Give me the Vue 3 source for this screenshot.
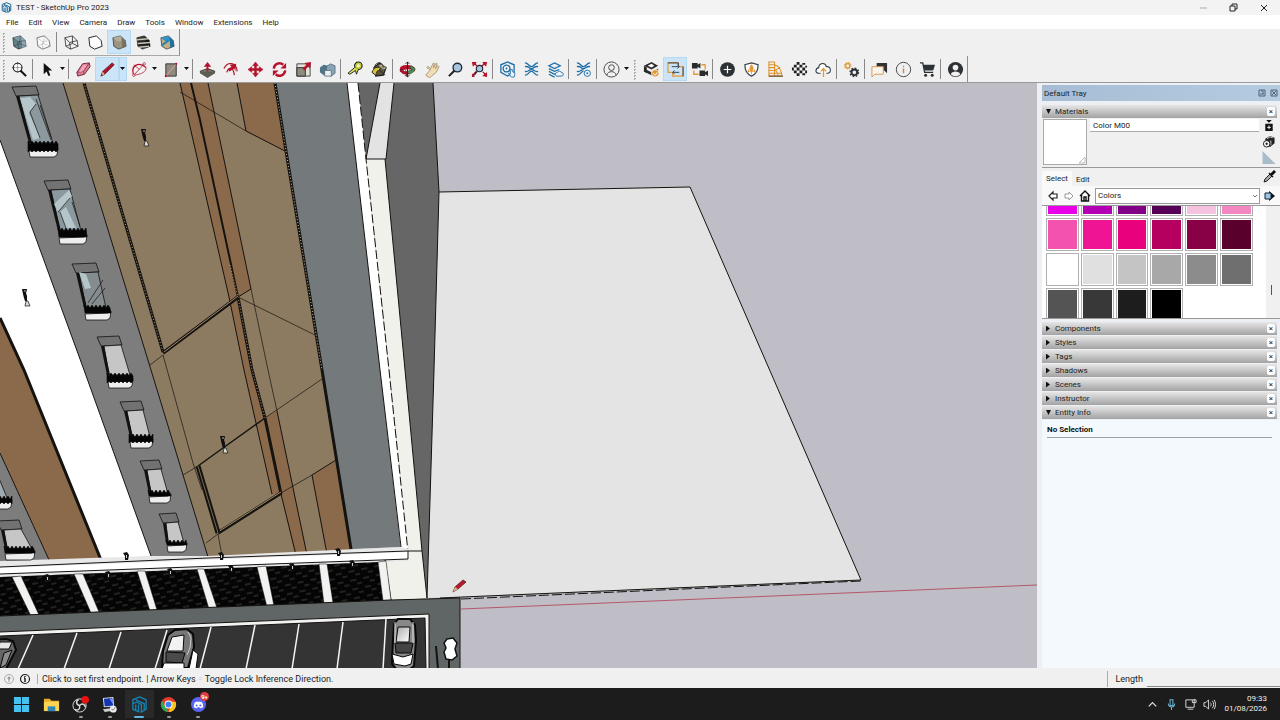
<script setup>
import { ref } from 'vue'

const menus = ['File', 'Edit', 'View', 'Camera', 'Draw', 'Tools', 'Window', 'Extensions', 'Help']

const k = 'fill="none" stroke="#222" stroke-width="1"'
const blue = 'fill="none" stroke="#1d6ea8" stroke-width="1.4"'
const red = '#b5122b'
const cube = (top, front, side) => `
  <path d="M2 4 10 2 15 7 16 13 8 16 3 13Z" fill="${front}" stroke="#333" stroke-width=".8"/>
  <path d="M2 4 10 2 15 7 7 8Z" fill="${top}"/>
  <path d="M11 3 15 7 16 13 12 15Z" fill="${side}"/>`

const icons = {
  xray: cube('#7f9aa5', '#64808c', '#8ba7b2') + `<path d="M2 4 7 8 8 16M7 8 15 7M3 13 9 10 16 13M9 10 10 2" ${k} stroke-opacity=".4"/>`,
  back: `<path d="M2 4 10 2 15 7 16 13 8 16 3 13Z" fill="#fafafa" stroke="#777"/><path d="M2 4 8 8 8 16M8 8 15 7M3 13 9 10 16 13M9 10 10 2" fill="none" stroke="#aaa" stroke-width=".8" stroke-dasharray="2 1"/>`,
  wire: '<path d="M2 4 10 2 15 7 16 13 8 16 3 13ZM2 4 7 9 8 16M7 9 15 7M3 13 10 10 16 13M10 10 10 2" fill="none" stroke="#222" stroke-width=".8"/>',
  hidden: '<path d="M2 4 10 2 15 7 16 13 8 16 3 13Z" fill="#fff" stroke="#222"/>',
  shaded: cube('#b3ad98', '#9b957f', '#777262'),
  textured: cube('#333', '#222', '#111') + '<path d="M2 6 14 5M3 10 16 9M4 14 15 13" stroke="#c9c6b8" stroke-width="1.6"/>',
  mono: cube('#2f93c9', '#c4ad7e', '#216f9f') + '<path d="M3 12 10 7" stroke="#2383b6" stroke-width="2"/>',
  zoomWin: '<circle cx="7" cy="7" r="4.6" fill="#fff" stroke="#222" stroke-width="1.2"/><path d="M7 1v12M1 7h12" stroke="#222" stroke-width=".8" stroke-dasharray="1 1"/><path d="m10 10 6 6" stroke="#111" stroke-width="2.2"/>',
  select: '<path d="m5 2 0 12 3-3 2 5 2-1-2-5h4Z" fill="#111"/>',
  eraser: '<path d="M2 12 8 3 15 2 16 6 10 14 3 16Z" fill="#dd7c93" stroke="#6b2636"/><path d="m2 12 7-1 6-9M9 11l1 3" fill="none" stroke="#8e3c50"/><path d="m4 12 5-8 4 0-5 7Z" fill="#f1a7b8"/>',
  pencil: `<path d="m2 16 2-5L14 2l2 2L6 14Z" fill="${red}" stroke="#4c101a" stroke-width=".8"/><path d="m2 16 2-5 2 3Z" fill="#d6b282"/><path d="m2 16 1-2 1 1Z" fill="#111"/>`,
  arc: `<path d="M3 15C-1 5 8 0 16 7" fill="none" stroke="${red}" stroke-width="1.3"/><path d="M3 15 14 3M3 4l6 5M16 7c0 4-4 7-13 8" fill="none" stroke="${red}" stroke-width=".8"/><circle cx="14" cy="3" r="1.3" fill="#fff" stroke="${red}" stroke-width=".8"/><circle cx="3" cy="15" r="1.3" fill="#fff" stroke="${red}" stroke-width=".8"/>`,
  rect: `<path d="M3 3h11v13H3Z" fill="#8f8b7d" stroke="#333"/><path d="M3 16 14 3" stroke="#f0a4a4"/><circle cx="3" cy="16" r="1.2" fill="${red}"/><circle cx="14" cy="3" r="1.2" fill="${red}"/>`,
  push: `<path d="m1 11 8-3 8 3-8 5Z" fill="#7a806c" stroke="#333"/><path d="M1 11v2l8 5 8-5v-2" fill="#5c5e50"/><path d="M9 1 5 6h3v5h2V6h3Z" fill="${red}"/>`,
  offset: `<path d="M1 8C5 0 14 1 15 11M4 12C6 6 11 6 12 15" fill="none" stroke="${red}" stroke-width="1.3"/><path d="m14 3-7 1 2 2-4 3 2 2 5-3 1 3Z" fill="${red}"/>`,
  move: `<path d="m9 1 3 4h-2v3h3V6l4 3-4 3v-2h-3v3h2l-3 4-3-4h2v-3H5v2L1 9l4-3v2h3V5H6Z" fill="${red}" stroke="${red}" stroke-width=".6"/>`,
  rotate: `<path d="M3 8a6 6 0 0 1 10-4M15 10a6 6 0 0 1-10 4" fill="none" stroke="${red}" stroke-width="2.6"/><path d="m16 2 0 6h-6ZM2 16v-6h6Z" fill="${red}"/>`,
  scale: `<path d="M2 3h14v13H2Z" fill="#e6e3da" stroke="#444"/><path d="M2 7h9v9H2Z" fill="#8f8b7d" stroke="#333"/><path d="m17 1-7 1 2 2-4 4 2 2 4-4 2 2Z" fill="${red}"/>`,
  flip: '<path d="m1 7 4-3 5 1v8l-5 2-4-3Z" fill="#4e7488"/><path d="m8 6 4-3 5 2v8l-4 3-5-2Z" fill="#87a5b4" stroke="#567" stroke-width=".8"/><path d="M6 10h7v6H6Z" fill="#e9eff2" stroke="#567" stroke-width=".8"/>',
  tape: '<circle cx="12" cy="5" r="4" fill="#c3cf38" stroke="#222" stroke-width="1.2"/><circle cx="12" cy="5" r="1.6" fill="#f5f5dc"/><path d="m8 7-7 6 2 1 6-4 1 4 2-5" fill="#dadf5b" stroke="#222"/>',
  paint: '<path d="m3 7 6-5 7 5-3 8-8 1Z" fill="#5a5442" stroke="#1d1b15" stroke-width="1.2"/><path d="m8 5 4-2 4 5-3 1Z" fill="#a9a68e"/><path d="M1 12c2-5 6-7 9-4L8 10c-2 0-2 3-3 5ZM9 10l6 5" fill="#d8c43c" stroke="#2b281a"/><path d="M4 6c1-6 9-5 9 1" fill="none" stroke="#222"/>',
  orbit: `<path d="M1 8c0-5 14-5 16 0v3c-4-3-12-3-16 1Z" fill="${red}"/><path d="M9 14c4 0 8-3 8-6l-4-3-2 2 3 2-5 2Z" fill="#4a8b53" stroke="#243d28" stroke-width=".6"/><path d="M1 9c1 4 4 5 7 5l-1 2 3-3-3-3v2L3 9Z" fill="${red}" stroke="#5a1420" stroke-width=".6"/><path d="M9 1v16M7 3l2-2 2 2M7 15l2 2 2-2" ${k}/>`,
  pan: '<path d="M3 15 8 9 5 8c-2-2 0-3 2-1l1 1 3-6 1 1-1 4 3-5 1 1-2 5 3-3 1 1-3 6-5 4-2 2Z" fill="#f3dcb0" stroke="#8a7a57" stroke-width=".7"/>',
  zoom: '<circle cx="11" cy="7" r="4.6" fill="#a8c5dd" stroke="#1e2a38" stroke-width="1.4"/><path d="m8 10-6 6" stroke="#222" stroke-width="2.2"/>',
  extents: `<circle cx="9" cy="8" r="3.4" fill="#a8c5dd" stroke="#1e2a38" stroke-width="1.2"/><path d="m6 11-3 4" stroke="#222" stroke-width="2"/><path d="M1 1h5L5 3l2 2-1 1-2-2-2 2ZM17 1h-5l1 2-2 2 1 1 2-2 2 2ZM17 17v-5l-2 1-2-2-1 1 2 2-2 2ZM1 17v-4l1 1 2-2 1 1-2 2 1 2Z" fill="${red}"/>`,
  tw1: `<path d="M9 1 16 4v8l-7 4-7-4V4Z" ${blue}/><circle cx="8" cy="8" r="3.6" ${blue}/><circle cx="8" cy="8" r="1" fill="#1d6ea8"/><path d="M12 9v5l-2-1 3 4h3l1-4-3-2V9Z" fill="#eef4f9" stroke="#1d6ea8" stroke-width=".9"/>`,
  tw2: `<path d="M2 2c4 0 4 4 7 4s3-4 7-4M2 6c4-1 4 2 7 2s3-3 7-2M2 15c4 0 4-4 7-4s3 4 7 4M2 11c4 1 4-2 7-2s3 3 7 2" ${blue}/>`,
  tw3: `<path d="m2 5 6-3 6 3-6 3ZM2 8l6 3 5-2M2 11l6 3 2-1M2 14l6 3" ${blue}/><path d="M10 16c-2-1-1-4 1-4 1-2 4-1 4 0 3 0 3 4 0 4Z" fill="#eef4f9" stroke="#1d6ea8"/>`,
  tw4: `<path d="M2 2c4 0 4 4 7 4s3-4 7-4M2 6c4-1 4 2 7 2s3-3 7-2M2 15c4 0 4-4 7-4M2 11c4 1 4-2 7-2" ${blue}/><circle cx="13" cy="13" r="3.3" fill="#eef4f9" stroke="#1d6ea8"/><circle cx="13" cy="13" r="1" fill="#1d6ea8"/>`,
  user: '<circle cx="9" cy="9" r="8" fill="none" stroke="#444"/><circle cx="9" cy="7" r="3" fill="none" stroke="#444"/><path d="M4 15c1-5 9-5 10 0" fill="none" stroke="#444"/>',
  ext1: '<path d="m1 5 8-4 7 4-7 4Z" fill="#2b2b2b"/><path d="m1 8 8 4 7-4v3l-7 4-8-4Z" fill="#2b2b2b"/><path d="M1 5v6l3 2V7Z" fill="#2b2b2b"/><path d="m5 5 4-2 3 2-3 2Z" fill="#fff"/><circle cx="13" cy="13" r="4" fill="#e39a37" stroke="#f0f0f0"/><path d="m11 13 2 2 2-3" fill="none" stroke="#fff"/>',
  ext2: '<path d="M12 5V2H1v10h4" fill="none" stroke="#e39a37" stroke-width="1.3"/><path d="M6 12v4h11V6h-4" fill="none" stroke="#e39a37" stroke-width="1.3"/><path d="M5 6h8M11 4l2 2-2 2M13 12H6m2-2-2 2 2 2M1 2h11v3M17 6v10" fill="none" stroke="#2d3d4a"/>',
  ext3: '<path d="M1 2h6v6H1ZM7 4l3-2v6L7 6ZM9 10h6v6H9Zm6 2 3-2v6l-3-2Z" fill="#2b2b2b"/><path d="M11 4h4v5M3 10v4h5" fill="none" stroke="#e39a37" stroke-width="1.4"/>',
  add: '<circle cx="9" cy="9" r="7.8" fill="#2c3135"/><path d="M9 5v8M5 9h8" stroke="#fff" stroke-width="1.3"/>',
  shield: '<path d="M9 16c-5-2-7-6-7-12l7-2 7 2c0 6-2 10-7 12Z" fill="#fff" stroke="#34424e" stroke-width="1.3"/><path d="M9 4c2 2 2 4 1 7H8C7 8 7 6 9 4ZM9 11v3M6 9l-1 3 2-1m5-2 1 3-2-1" fill="#e39a37" stroke="#e39a37"/>',
  fan: '<path d="M2 1h6v15H2ZM8 4c4 1 7 5 8 12H8M8 9c2 1 3 3 4 7M2 4h6M2 7h6M2 10h6M2 13h14M8 10l6-3" fill="none" stroke="#dc902b" stroke-width="1.1"/><path d="M2 16h15" stroke="#444"/>',
  checker: '<circle cx="9" cy="9" r="7.8" fill="#f4f4f4"/><path d="M6 1h3v3H6ZM12 2h3v2h-3ZM3 4h3v3H3ZM9 4h3v3H9ZM15 5h2v2h-2ZM1 7h2v3H1ZM6 7h3v3H6ZM12 7h3v3h-3ZM3 10h3v3H3ZM9 10h3v3H9ZM15 10h2v3h-2ZM6 13h3v3H6ZM12 13h3v2h-3Z" fill="#222"/>',
  cloud: '<path d="M6 13H4c-4 0-4-5 0-6C4 2 11 1 12 6c5-1 6 7 1 7h-1" fill="#fff" stroke="#34424e" stroke-width="1.2"/><path d="M9 17V9M6 11l3-3 3 3" fill="none" stroke="#e39a37" stroke-width="1.4"/>',
  gears: '<circle cx="5" cy="5" r="2.4" fill="none" stroke="#e39a37" stroke-width="1.5"/><circle cx="5" cy="5" r="3.6" fill="none" stroke="#e39a37" stroke-dasharray="1.4 1.4"/><circle cx="12" cy="12" r="3" fill="none" stroke="#2c3135" stroke-width="2"/><circle cx="12" cy="12" r="4.5" fill="none" stroke="#2c3135" stroke-width="1.4" stroke-dasharray="1.8 1.7"/>',
  chat: '<path d="M6 2h11v11l-3-3H6Z" fill="#2f3336"/><path d="M1 6h12v8H4l-3 3Z" fill="#fbf4ea" stroke="#d9955a"/>',
  info: '<circle cx="9" cy="9" r="7.6" fill="none" stroke="#444"/><path d="M9 8v5M9 5v1.5" stroke="#d4843c" stroke-width="1.5"/>',
  cart: '<path d="M1 2h3l2 10h9" fill="none" stroke="#2c3135" stroke-width="1.4"/><path d="M4 4h13l-2 6H6Z" fill="#2c3135"/><circle cx="7" cy="15" r="1.6" fill="#2c3135"/><circle cx="14" cy="15" r="1.6" fill="#2c3135"/>',
  account: '<circle cx="9" cy="9" r="8" fill="#2c3135"/><circle cx="9" cy="7" r="3" fill="#f0f0f0"/><path d="M4 14c1-4 9-4 10 0-3 3-7 3-10 0Z" fill="#f0f0f0"/>',
}

const styleTools = ['xray', 'back', '|', 'wire', 'hidden', 'shaded', 'textured', 'mono']
const mainTools = [
  'zoomWin', '|', 'select', 'v', '|', 'eraser', 'pencil', 'v', 'arc', 'v', 'rect', 'v', '|',
  'push', 'offset', 'move', 'rotate', 'scale', 'flip', '|', 'tape', 'paint', '|',
  'orbit', 'pan', 'zoom', 'extents', '|', 'tw1', 'tw2', 'tw3', '|', 'tw4', '|', 'user', 'v', ':',
  'ext1', 'ext2', 'ext3', '|', 'add', 'shield', 'fan', 'checker', 'cloud', '|', 'gears', '|',
  'chat', 'info', 'cart', '|', 'account',
]

const activeStyle = ref('shaded')
const activeTool = ref('pencil')
const isOn = (name) => name === activeStyle.value || name === activeTool.value || name === 'ext2'

const swatches = [
  '#e800e8', '#b400b4', '#820087', '#560058', '#f5c3e0', '#f387c1',
  '#f352ae', '#ef1493', '#e8007c', '#b50060', '#880045', '#5a002c',
  '#ffffff', '#e0e0e0', '#c4c4c4', '#a8a8a8', '#8c8c8c', '#6f6f6f',
  '#545454', '#383838', '#1d1d1d', '#000000',
]
const materialName = ref('Color M00')
const library = ref('Colors')
const panels = ['Components', 'Styles', 'Tags', 'Shadows', 'Scenes', 'Instructor']

// x, y, w: lintel; bl, br, by: foot of the glass; then the planter box
const windows = [
  { x: 12, y: 87, w: 24, bl: 31, br: 53, by: 143, glass: '#8b989d', planter: [28, 141, 30, 16] },
  { x: 44, y: 181, w: 24, bl: 60, br: 81, by: 231, glass: '#8b989d', planter: [58, 228, 29, 16] },
  { x: 72, y: 264, w: 24, bl: 86, br: 106, by: 308, glass: '#858c8f', planter: [84, 305, 27, 15] },
  { x: 97, y: 337, w: 22, bl: 109, br: 130, by: 375, glass: '#c6c6c6', planter: [107, 373, 26, 15] },
  { x: 120, y: 402, w: 21, bl: 132, br: 150, by: 437, glass: '#c6c6c6', planter: [129, 434, 24, 14] },
  { x: 140, y: 461, w: 19, bl: 151, br: 168, by: 494, glass: '#c6c6c6', planter: [148, 490, 23, 13] },
  { x: 159, y: 514, w: 17, bl: 168, br: 184, by: 543, glass: '#c6c6c6', planter: [166, 540, 21, 12] },
  { x: -3, y: 521, w: 22, bl: 7, br: 32, by: 549, glass: '#c6c6c6', planter: [4, 546, 31, 14] },
  { x: -26, y: 468, w: 22, bl: -14, br: 8, by: 500, glass: '#9fabb0', planter: [-12, 496, 24, 13] },
]
const lintel = (w) => `${w.x},${w.y} ${w.x + w.w},${w.y - 1} ${w.x + w.w + 3},${w.y + 8} ${w.x + 4},${w.y + 9}`
const glass = (w) => `${w.x + 7},${w.y + 9} ${w.x + w.w + 2},${w.y + 8} ${w.br},${w.by} ${w.bl},${w.by}`
const reveal = (w) => `${w.x + 4},${w.y + 9} ${w.x + 7},${w.y + 9} ${w.bl + 1},${w.by} ${w.bl - 2},${w.by}`
const box = ([x, y, w, h]) => `${x + 1},${y + h - 6} ${x + w - 3},${y + h - 7} ${x + w},${y + h - 9} ${x + w - 1},${y + h - 2} ${x + w - 4},${y + h} ${x + 2},${y + h}`
function hedge([x, y, w, h]) {
  const pts = []
  for (let i = 0; i <= w; i += 2) pts.push(`${x + i},${y + (i % 4 ? 3 : 0)}`)
  for (let i = w; i >= 0; i -= 2) pts.push(`${x + i},${y + h - (i % 4 ? 7 : 5)}`)
  return pts.join(' ')
}

const struts = [
  '12,577 21,576 39,615 31,616', '74,574 83,574 99,612 91,613', '137,571 145,571 157,610 150,611',
  '197,569 204,569 217,608 209,609', '257,567 266,566 274,606 267,607', '319,564 327,564 333,603 324,604',
  '378,562 386,561 391,600 383,601',
]
const bays = [
  'M33 635 18 669', 'M77 633 64 669', 'M121 632 109 669', 'M167 630 155 669', 'M211 627 200 669',
  'M255 625 246 669', 'M299 624 292 669', 'M343 622 337 669', 'M386 619 383 669',
]
const figures = [[144, 137], [25, 297], [223, 444]]
const lamps = [[126, 556], [221, 556], [338, 552], [47, 578], [108, 575], [170, 572], [231, 569], [292, 567], [352, 564]]

const apps = [
  { name: 'Start', art: '<path d="M1 1h7.5v7.5H1ZM9.5 1H17v7.5H9.5ZM1 9.5h7.5V17H1ZM9.5 9.5H17V17H9.5Z" fill="#45c2f0"/>' },
  { name: 'File Explorer', art: '<path d="M1 3h6l2 2h8v11H1Z" fill="#e9ae2a"/><path d="M1 6h16v10H1Z" fill="#fbd456"/><path d="M5 11h8v5H5Z" fill="#2c87b8"/>' },
  { name: 'OBS Studio', run: true, art: '<circle cx="8" cy="10" r="7" fill="#1b1b1b" stroke="#ddd"/><path d="M8 10C4 9 4 5 7 4M8 10c3-3 6-1 6 2M8 10c1 4-2 6-5 4" fill="none" stroke="#ddd" stroke-width="1.5"/><circle cx="14" cy="4" r="4" fill="#e81010"/>' },
  { name: 'Remote Desktop', run: true, art: '<path d="m2 2 11-1 1 10-11 1Z" fill="#e5e5e5"/><path d="m3 3 9-1 1 8-9 1Z" fill="#1434b5"/><path d="m9 3 3 0 1 6Z" fill="#7c9bf0"/><path d="m2 14 8-1 1 3-7 1Z" fill="#ccc"/><circle cx="13" cy="14" r="3.6" fill="#eee"/><path d="m11 14 2 1 2-3" fill="none" stroke="#777"/>' },
  { name: 'SketchUp', on: true, art: '<path d="M9 1 16 4v10l-5 3V9L6 6.5 2 8V4ZM2 8v6l7 3M5 9v6M8 9v7M5 4l9 4v7" fill="none" stroke="#1683b5" stroke-width="1.4"/>' },
  { name: 'Google Chrome', run: true, art: '<circle cx="9" cy="9" r="8" fill="#e33b2e"/><path d="M2 5 9 17A8 8 0 0 1 2 5Z" fill="#2da94f"/><path d="M9 17 13 6h3.5A8 8 0 0 1 9 17Z" fill="#fbc116"/><circle cx="9" cy="9" r="4.2" fill="#fff"/><circle cx="9" cy="9" r="3.2" fill="#3f82ee"/>' },
  { name: 'Discord', run: true, badge: '9+', art: '<circle cx="9" cy="9" r="8" fill="#5865f2"/><path d="M4 12c0-4 1-6 3-6h4c2 0 3 2 3 6l-3 1-1-1H8l-1 1Z" fill="#fff"/><circle cx="7" cy="10" r="1.1" fill="#5865f2"/><circle cx="11" cy="10" r="1.1" fill="#5865f2"/>' },
]
</script>

<template>
  <div class="app">
    <header class="titlebar">
      <svg class="logo" viewBox="0 0 18 18"><path d="M9 1 16 4v10l-5 3V9L6 6 2 8V4ZM2 8v6l7 3M5 9v6M8 9v7M5 4l9 4v7" fill="none" stroke="#13639a" stroke-width="1.6" /></svg>
      <span class="title">TEST - SketchUp Pro 2023</span>
      <div class="win_btns">
        <button type="button" aria-label="Minimize"><svg viewBox="0 0 10 10"><path d="M2 5h7" stroke="#aaa" /></svg></button>
        <button type="button" aria-label="Restore"><svg viewBox="0 0 10 10"><path d="M2 3h5v5H2ZM4 3V1h5v5H7" fill="none" stroke="#222" /></svg></button>
        <button type="button" aria-label="Close"><svg viewBox="0 0 10 10"><path d="m2 2 6 6M8 2 2 8" stroke="#222" /></svg></button>
      </div>
    </header>

    <nav class="menubar">
      <button v-for="m in menus" :key="m" type="button">{{ m }}</button>
    </nav>

    <div class="toolbars">
      <div class="toolbar">
        <i class="grip"></i>
        <template v-for="(t, i) in styleTools" :key="i">
          <i v-if="t === '|'" class="sep"></i>
          <button v-else type="button" class="tool" :class="{ on: isOn(t) }" :aria-label="t" @click="activeStyle = t">
            <svg viewBox="0 0 18 18" v-html="icons[t]"></svg>
          </button>
        </template>
      </div>
      <div class="toolbar">
        <i class="grip"></i>
        <template v-for="(t, i) in mainTools" :key="i">
          <i v-if="t === '|'" class="sep"></i>
          <i v-else-if="t === ':'" class="grip"></i>
          <button v-else-if="t === 'v'" type="button" class="drop" :class="{ on: mainTools[i - 1] === activeTool }" aria-label="More">
            <svg viewBox="0 0 6 4"><path d="M0 0h5L2.5 3Z" fill="#111" /></svg>
          </button>
          <button v-else type="button" class="tool" :class="{ on: isOn(t) }" :aria-label="t" @click="activeTool = t">
            <svg viewBox="0 0 18 18" v-html="icons[t]"></svg>
          </button>
        </template>
      </div>
    </div>

    <main class="workspace">
      <div class="viewport">
        <svg class="scene" viewBox="0 83 1037 585" preserveAspectRatio="xMinYMin slice">
          <defs>
            <pattern id="mesh" width="13" height="9" patternUnits="userSpaceOnUse" patternTransform="rotate(-12)">
              <rect width="13" height="9" fill="#050505" />
              <path d="M1 2h6M7 6h5" stroke="#3f3f3f" stroke-width="1" />
            </pattern>
            <linearGradient id="carGlass" x1="0" y1="0" x2="1" y2="1">
              <stop offset="0" stop-color="#aaa" />
              <stop offset="1" stop-color="#fff" />
            </linearGradient>
          </defs>
          <rect y="83" width="1037" height="585" fill="#bfbec6" />

          <!-- ground plane -->
          <path d="M439 192 690 187 861 580 427 598 430 450Z" fill="#e4e4e4" />
          <path d="M439 192 690 187 861 580 440 598" class="ln" />
          <path d="M461 599 861 581" class="ln" stroke-dasharray="10 3" />
          <path d="M461 609 1037 585" fill="none" stroke="#b5566a" />

          <!-- facades -->
          <path d="M0 83H63L151 370 208 557 151 556 84 370 0 140Z" fill="#7d7d7d" />
          <path d="M0 140 84 370 151 556 101 560 0 318Z" fill="#fff" />
          <path d="M0 318 24 370 102 560 50 562 0 453Z" fill="#8b694b" />
          <path d="M0 453 50 562 0 567Z" fill="#7d7d7d" />
          <path d="M63 83H275L286 151 322 370 351 553 208 557 151 370Z" fill="#8d7b61" />
          <path d="M180 83H208L251 289 238 297 252 370 265 418 277 411 307 555H295L281 494 272 494 244 370 229 297Z" fill="#8b694b" />
          <path d="M237 83H275L285 151 246 131ZM312 475 336 460 351 553 327 554Z" fill="#8b694b" />
          <path d="M63 83 151 370 208 557M0 140 84 370 151 556M0 453 50 562" class="ln" />
          <path d="M0 318 24 370 101 560" class="ln" stroke-width="3" />
          <path d="M180 83 229 297 244 370 272 494M281 494 296 555M208 83 251 289 238 297M277 411 307 555M237 83 246 131 285 151M327 554 312 475 336 460" class="ln" />
          <path d="M180 92 246 131M251 289 268 370 277 411M240 298 317 336M150 365 163 355 193 463 202 490M183 475 198 466M265 418 322 379M206 543 218 534 222 556M281 493 312 475" class="ln thin" />
          <path d="M191 83 200 120 238 297" class="ln" stroke-width="2" />
          <path d="M238 297 252 370 265 418 281 494" class="ln" stroke-width="3" />
          <path d="M84 83 163 352" class="ln" stroke-width="3" />
          <path d="M84 83 163 352M230 265 238 297 252 370 265 418" fill="none" stroke="#b39b77" stroke-dasharray="1 2" />
          <path d="M163 353 238 297M218 533 281 493" class="ln" stroke-width="3.5" />
          <path d="M164 352 238 296M218 532 281 492" fill="none" stroke="#a08b6d" />
          <path d="M198 466 218 533" class="ln" stroke-width="5" />
          <path d="M198 466 218 533" fill="none" stroke="#77674f" />
          <path d="M198 466 223 448 265 418" class="ln" stroke-width="1.5" />

          <!-- side wall and slab edges -->
          <path d="M275 83H347L374 300 401 547 351 549 322 370Z" fill="#747a7c" />
          <path d="M275 83 286 151 322 370 351 549" class="ln" stroke-width="3" />
          <path d="M275 83 286 151 322 370" fill="none" stroke="#c9bfa9" stroke-dasharray="1 2" />
          <path d="M357 83H433L439 192 434 370 427 598 385 400Z" fill="#666" />
          <path d="M380 83H394L386 159H366Z" fill="#e3e3e3" />
          <path d="M366 159H385L405 370 422 551 427 598 391 601 385 560 409 552Z" fill="#f0f1eb" />
          <path d="M347 83H358L366 159 389 370 409 553 401 550 380 370Z" fill="#fff" />
          <path d="M347 83 380 370 401 547M380 83 366 159H386L394 83M433 83 439 192 434 370 427 598M385 159 405 370 422 551 427 598" class="ln" />
          <path d="M358 83 366 159 389 370 408 552" class="ln" stroke-dasharray="9 3" />

          <!-- ledge, mesh panels, road -->
          <path d="M0 561 151 556 208 556 401 547 409 549V561L0 577Z" fill="#e8e8e8" />
          <path d="M0 568 409 552V559L0 574Z" fill="#fff" />
          <path d="M0 567 208 558 408 551V559L0 574M408 551H422M385 560 391 600" class="ln" />
          <path d="M0 577 380 562 384 601 0 616Z" fill="url(#mesh)" />
          <polygon v-for="s in struts" :key="s" :points="s" fill="#f2f2f0" stroke="#111" stroke-width=".5" />
          <path d="M0 616 391 600 460 598V668H0Z" fill="#606565" />
          <path d="M0 616 391 600 460 598V668" class="ln" />
          <path d="M0 632 429 614V668H0Z" fill="#f2f2f2" />
          <path d="M0 636 425 618 426 668H0Z" fill="#343434" />
          <path d="M0 632 429 614V668M0 636 425 618 426 668" class="ln" />
          <path v-for="b in bays" :key="b" :d="b" fill="none" stroke="#f5f5f5" stroke-width="1.5" />

          <g v-for="(w, i) in windows" :key="'w' + i">
            <polygon :points="lintel(w)" fill="#727272" stroke="#111" stroke-width=".8" />
            <polygon :points="glass(w)" :fill="w.glass" stroke="#111" stroke-width=".8" />
            <polygon :points="reveal(w)" fill="#111" />
            <polygon :points="box(w.planter)" fill="#eee" stroke="#111" stroke-width=".8" />
            <polygon :points="hedge(w.planter)" fill="#050505" stroke="#050505" stroke-width=".6" />
          </g>
          <path d="M20 98 30 97 36 104 29 113 40 138 33 140ZM54 204 69 190 72 196 58 212ZM60 212 66 207 76 228 66 228ZM79 272 86 274 91 288 85 289Z" fill="#b5c6ca" />
          <path d="M36 99 51 140M40 105 51 137M72 202 80 226M88 303 103 280M92 304 105 288M36 104 30 112 40 138M58 212 70 198M60 212 66 228" class="ln thin" />

          <g v-for="f in figures" :key="f[0]" :transform="`translate(${f[0]} ${f[1]})`">
            <path d="M-3-8 2-8 1-4 2-1 2 4 0 4-1 1-2-3Z" fill="#111" />
            <path d="M-1-7H1V-5H-1ZM1 4H3L5 9H0Z" fill="#d8d8cc" stroke="#111" stroke-width=".7" />
          </g>
          <g v-for="l in lamps" :key="l[0]" :transform="`translate(${l[0]} ${l[1]})`">
            <path d="M-3-3 1-4 3-1 2 4H-1V0Z" fill="#111" /><path d="M0-1h1v3H0Z" fill="#ccc" />
          </g>

          <!-- cars -->
          <g stroke="#080808">
            <path d="M394 624 398 619H410L415 625 416 640 414 666 409 670H397L392 664 393 640Z" fill="#888" stroke-width="2" />
            <path d="M398 627H410L409 642H396Z" fill="url(#carGlass)" />
            <path d="M395 643H413L411 653H396Z" fill="#444" />
            <path d="M392 654 403 657 413 654 411 664 405 666 394 664Z" fill="#fff" />
            <path d="M395 622V643M413 622V643" stroke="#ddd" />
            <path d="M168 635 175 630 187 629 193 634 194 647 188 668H162L163 651Z" fill="#777" stroke-width="2" />
            <path d="M172 637 184 635 183 651H167Z" fill="#f2f2f2" />
            <path d="M166 652 185 653 182 663 166 662Z" fill="#4a4a4a" />
            <path d="M188 632 191 638 190 648 187 655" stroke="#ccc" fill="none" />
            <path d="M164 663H184V669H162ZM193 650 198 654 196 669H189Z" fill="#fff" />
            <path d="M-8 640 6 639 13 641 16 650 6 669H-8Z" fill="#666" stroke-width="2" />
            <path d="M0 642 12 642 9 649H-2Z" fill="#e5e5e5" />
            <path d="M4 653 12 650 6 665 0 668Z" fill="#8c8c8c" />
          </g>
          <path d="M447 639 453 638 457 643 455 649 457 656 452 660 446 659 444 652 446 648 444 643Z" fill="#fff" stroke="#111" stroke-width="1.5" />
          <path d="M449 659V669M436 646 438 669" class="ln" stroke-width="2" />

          <!-- pencil cursor -->
          <path d="M453 592 455 587 463 580 466 582 458 589Z" fill="#b8192c" stroke="#5c1820" stroke-width=".8" />
          <path d="M453 592 455 587 458 589Z" fill="#d8b58c" />
        </svg>
      </div>

      <aside class="tray">
        <div class="tray_title">
          <span>Default Tray</span>
          <button type="button" aria-label="Pin"><svg viewBox="0 0 8 8"><path d="M1 1h6v6H1ZM3 2h2v3M2 5h4" fill="none" stroke="#4d6375" /></svg></button>
          <button type="button" aria-label="Close tray"><svg viewBox="0 0 8 8"><path d="M1 1h6v6H1ZM2 2l4 4M6 2 2 6" fill="none" stroke="#4d6375" /></svg></button>
        </div>

        <section class="materials">
          <div class="panel_head">
            <button type="button" class="panel_toggle"><i class="tri open"></i>Materials</button>
            <button type="button" class="panel_x" aria-label="Close Materials">×</button>
          </div>
          <div class="mat_top">
            <div class="preview"><svg viewBox="0 0 8 8"><path d="M7 1v6H1Z" fill="none" stroke="#bbb" /></svg></div>
            <input v-model="materialName" class="mat_name" type="text" aria-label="Material name" />
            <div class="mat_side">
              <button type="button" aria-label="Display secondary pane"><svg viewBox="0 0 14 14"><path d="M4 1h6L7 4ZM3 5h8v8H3Z" fill="#111" /><path d="M7 7v4M5 9h4" stroke="#fff" /></svg></button>
              <button type="button" aria-label="Create material"><svg viewBox="0 0 14 14"><path d="m3 4 5-3 5 2v6l-5 4-5-3Z" fill="#222" /><path d="m5 4 3-2 3 1M9 6v5" stroke="#ddd" fill="none" /><circle cx="4.5" cy="9.5" r="3.5" fill="#fff" stroke="#111" /><path d="M4.5 8v3M3 9.5h3" stroke="#111" /></svg></button>
              <button type="button" aria-label="Set default"><svg viewBox="0 0 14 14"><path d="M0 0v14h14Z" fill="#a9bcca" /></svg></button>
            </div>
          </div>
          <div class="tabs">
            <button type="button" class="tab on">Select</button>
            <button type="button" class="tab">Edit</button>
            <button type="button" class="sampler" aria-label="Sample paint"><svg viewBox="0 0 14 14"><path d="m2 12 1-3 5-5 2 2-5 5Z" fill="#aaa" stroke="#222" /><path d="m7 3 4 4M9 4l3-3 1 1-3 3Z" stroke="#111" stroke-width="1.5" /></svg></button>
          </div>
          <div class="nav">
            <button type="button" aria-label="Back"><svg viewBox="0 0 12 12"><path d="m2 6 4-4v2h4v4H6v2Z" fill="#fff" stroke="#222" stroke-width="1.2" /></svg></button>
            <button type="button" aria-label="Forward"><svg viewBox="0 0 12 12"><path d="M10 6 6 2v2H2v4h4v2Z" fill="#fff" stroke="#999" /></svg></button>
            <button type="button" aria-label="In model"><svg viewBox="0 0 12 12"><path d="M1 6 6 1l5 5M2.5 5v6h7V5M5 11V7h2v4" fill="none" stroke="#111" stroke-width="1.4" /></svg></button>
            <label class="lib">
              <select v-model="library" aria-label="Library"><option>Colors</option></select>
              <svg viewBox="0 0 8 6"><path d="m2 2 2 2 2-2" fill="none" stroke="#777" /></svg>
            </label>
            <button type="button" class="details" aria-label="Details"><svg viewBox="0 0 12 12"><path d="M5 1 11 6 5 11Z" fill="#111" /><path d="M1 3h6v6H1Z" fill="#9cc4e6" stroke="#123" /></svg></button>
          </div>
          <div class="swatch_box">
            <div class="swatches">
              <button v-for="c in swatches" :key="c" type="button" class="swatch" :aria-label="c">
                <i :style="{ background: c }"></i>
              </button>
            </div>
            <div class="scroll"><i></i></div>
          </div>
        </section>

        <div v-for="p in panels" :key="p" class="panel_head">
          <button type="button" class="panel_toggle"><i class="tri"></i>{{ p }}</button>
          <button type="button" class="panel_x" :aria-label="'Close ' + p">×</button>
        </div>
        <div class="panel_head">
          <button type="button" class="panel_toggle"><i class="tri open"></i>Entity Info</button>
          <button type="button" class="panel_x" aria-label="Close Entity Info">×</button>
        </div>
        <section class="entity"><h2>No Selection</h2></section>
      </aside>
    </main>

    <footer class="status">
      <svg viewBox="0 0 12 12"><circle cx="6" cy="6" r="4.5" fill="none" stroke="#aaa" /><circle cx="6" cy="5" r="1.5" fill="#999" /><path d="M6 5v4" stroke="#999" /></svg>
      <svg viewBox="0 0 12 12"><circle cx="6" cy="6" r="4.5" fill="none" stroke="#222" stroke-width="1.2" /><path d="M6 5v4M6 3v1M5 5h1" stroke="#222" stroke-width="1.5" /></svg>
      <p>Click to set first endpoint. | Arrow Keys <i>=</i> Toggle Lock Inference Direction.</p>
      <label class="measure">Length<input type="text" /></label>
    </footer>

    <div class="taskbar">
      <div class="apps">
        <button v-for="a in apps" :key="a.name" type="button" :class="{ run: a.run, on: a.on }" :aria-label="a.name">
          <svg viewBox="0 0 18 18" v-html="a.art"></svg>
          <b v-if="a.badge">{{ a.badge }}</b>
        </button>
      </div>
      <div class="systray">
        <button type="button" aria-label="Hidden icons"><svg viewBox="0 0 14 14"><path d="m3 9 4-4 4 4" fill="none" stroke="#ddd" stroke-width="1.4" /></svg></button>
        <button type="button" aria-label="Microphone"><svg viewBox="0 0 14 14"><path d="M5.5 2h3v6h-3ZM3.5 6c0 5 7 5 7 0M7 10v3" fill="none" stroke="#6fb4cf" stroke-width="1.1" /></svg></button>
        <button type="button" aria-label="Network"><svg viewBox="0 0 14 14"><path d="M9 2H2v8h9V6M4 12h6M11 1v5M9 2h4v3H9Z" fill="none" stroke="#ddd" /></svg></button>
        <button type="button" aria-label="Volume"><svg viewBox="0 0 14 14"><path d="M1 5h2l3-3v10L3 9H1ZM8 5c1 1 1 3 0 4M10 3c2 2 2 6 0 8M12 2c2 3 2 7 0 10" fill="none" stroke="#ddd" /></svg></button>
      </div>
      <div class="clock"><span>09:33</span><span>01/08/2026</span></div>
    </div>
  </div>
</template>

<style>
body {
  margin: 0;
}
</style>

<style scoped>
.app {
  display: flex;
  flex-direction: column;
  height: 100vh;
  overflow: hidden;
  background: #f0f0f0;
  color: #222;
  font-family: Roboto, "Noto Sans", sans-serif;
  font-size: 8px;
}
button, input, select {
  margin: 0;
  padding: 0;
  border: none;
  border-radius: 0;
  background: none;
  color: inherit;
  font: inherit;
}
svg {
  display: block;
}
.titlebar {
  display: flex;
  align-items: center;
  gap: 4px;
  height: 15px;
  padding-left: 1px;
  background: #f3f3f3;
}
.logo {
  width: 11px;
  height: 11px;
}
.title {
  flex: 1;
}
.win_btns {
  display: flex;
}
.win_btns button {
  display: flex;
  justify-content: center;
  width: 30px;
}
.win_btns button:last-child {
  width: 32px;
}
.win_btns svg {
  width: 10px;
  height: 10px;
}
.menubar {
  display: flex;
  gap: 10px;
  height: 14px;
  padding-left: 6px;
  background: #fff;
}
.toolbars {
  display: flex;
  flex-direction: column;
  align-items: flex-start;
  border-bottom: 1px solid #999;
}
.toolbar {
  display: flex;
  align-items: center;
  height: 26px;
  border-right: 1px solid #8d8d8d;
}
.toolbar:first-child {
  border-bottom: 1px solid #a8a8a8;
}
.grip {
  width: 7px;
  height: 21px;
  background: radial-gradient(circle, #aaa 1px, transparent 1px) 0 0 / 7px 3px;
}
.drop + .grip {
  width: 8px;
}
.sep {
  width: 4px;
  height: 20px;
  background: linear-gradient(#888, #888) 1px 0 / 1px 100% no-repeat;
}
.tool {
  display: flex;
  align-items: center;
  justify-content: center;
  width: 24px;
  height: 24px;
}
.tool svg {
  width: 17px;
  height: 17px;
}
.drop {
  display: flex;
  align-items: center;
  justify-content: center;
  width: 8px;
  height: 24px;
}
.drop svg {
  width: 6px;
  height: 4px;
}
.on.tool, .on.drop {
  background: #cce4f7;
  box-shadow: inset 0 0 0 1px #b5d8f3;
}
.workspace {
  display: flex;
  flex: 1;
  min-height: 0;
}
.viewport {
  flex: 1;
  min-width: 0;
}
.scene {
  width: 100%;
  height: 100%;
}
.ln {
  fill: none;
  stroke: #151310;
}
.ln.thin {
  stroke-width: 0.7;
}
.tray {
  display: flex;
  flex-direction: column;
  width: 238px;
  padding-left: 5px;
  background: #eceff3;
}
.tray_title {
  display: flex;
  align-items: center;
  gap: 4px;
  height: 16px;
  margin: 2px 0 4px;
  padding: 0 2px;
  background: linear-gradient(90deg, #a6bdd5, #b5cbe0);
}
.tray_title span {
  flex: 1;
}
.tray_title svg {
  width: 8px;
  height: 8px;
}
.materials {
  background: #f0f0f0;
  border-bottom: 1px solid #999;
  margin-bottom: 3px;
}
.panel_head {
  display: flex;
  align-items: center;
  justify-content: space-between;
  height: 13px;
  margin: 0 3px 1px 0;
  padding-right: 2px;
  background: linear-gradient(#e6e6e6, #a3a3a3);
}
.panel_toggle {
  display: flex;
  align-items: center;
  flex: 1;
  gap: 4px;
  height: 13px;
  padding-left: 4px;
}
.tri {
  width: 5px;
  height: 6px;
  background: #111;
  clip-path: polygon(0 0, 80% 50%, 0 100%);
}
.tri.open {
  height: 5px;
  clip-path: polygon(0 0, 100% 0, 50% 100%);
}
.panel_x {
  width: 8px;
  height: 9px;
  border-radius: 2px;
  background: #fff;
  line-height: 8px;
}
.mat_top {
  display: flex;
  align-items: flex-start;
  gap: 3px;
  height: 48px;
  padding-left: 1px;
  border-bottom: 1px solid #999;
}
.preview {
  display: flex;
  align-items: flex-end;
  justify-content: flex-end;
  width: 42px;
  height: 44px;
  border: 1px solid #aaa;
  background: #fff;
}
.preview svg {
  width: 8px;
  height: 8px;
}
.mat_name {
  flex: 1;
  min-width: 0;
  height: 12px;
  padding-left: 3px;
  border-bottom: 1px solid #aaa;
  background: #fff;
}
.mat_side {
  display: flex;
  flex-direction: column;
  gap: 3px;
  padding: 0 4px 0 0;
}
.mat_side svg {
  width: 14px;
  height: 13px;
}
.tabs {
  display: flex;
  align-items: flex-end;
  height: 18px;
}
.tab {
  height: 13px;
  padding: 0 4px;
}
.tab.on {
  height: 15px;
  background: #f9f9f9;
}
.sampler {
  margin: 0 4px 2px auto;
}
.sampler svg {
  width: 14px;
  height: 14px;
}
.nav {
  display: flex;
  align-items: center;
  gap: 4px;
  height: 19px;
  padding: 0 4px 0 5px;
  border-bottom: 1px solid #999;
  background: #f9f9f9;
}
.nav svg {
  width: 12px;
  height: 12px;
}
.lib {
  display: flex;
  align-items: center;
  flex: 1;
  height: 14px;
  border: 1px solid #999;
  background: #fff;
}
.lib select {
  flex: 1;
  appearance: none;
  padding-left: 2px;
}
.lib svg {
  width: 8px;
  height: 6px;
}
.swatch_box {
  display: flex;
  justify-content: space-between;
  height: 112px;
  margin-right: 3px;
  padding-left: 4px;
  overflow: hidden;
  background: #fff;
}
.swatches {
  display: grid;
  grid-template-columns: repeat(6, 1fr);
  grid-auto-rows: 33px;
  gap: 2px;
  width: 207px;
  margin-top: -23px;
}
.swatch {
  display: flex;
  padding: 1px;
  border: 1px solid #b0b0b0;
}
.swatch i {
  flex: 1;
}
.scroll {
  display: flex;
  align-items: center;
  justify-content: center;
  width: 11px;
  padding-top: 56px;
  background: #f0f0f0;
}
.scroll i {
  width: 1px;
  height: 10px;
  background: #555;
}
.entity {
  flex: 1;
  padding: 4px 8px 0 5px;
  background: #f3f9fc;
}
.entity h2 {
  margin: 0;
  padding-bottom: 2px;
  border-bottom: 1px solid #9aa3a8;
  color: #111;
  font-size: 8px;
  line-height: 11px;
}
.status {
  display: flex;
  align-items: center;
  gap: 4px;
  height: 20px;
  padding: 1px 0 0 3px;
  box-sizing: border-box;
  background: #f0f0f0;
  font-size: 9px;
}
.status svg {
  width: 12px;
  height: 12px;
}
.status p {
  flex: 1;
  margin: 0 0 0 2px;
  padding-left: 4px;
  border-left: 1px solid #aaa;
}
.status p i {
  color: #ccc;
}
.measure {
  display: flex;
  align-items: center;
  gap: 4px;
  padding-left: 7px;
  border-left: 1px solid #aaa;
}
.measure input {
  width: 133px;
  height: 15px;
  border-bottom: 1px solid #888;
}
.taskbar {
  display: flex;
  align-items: center;
  height: 32px;
  padding: 0 13px 0 7px;
  background: #1c1c1c;
  color: #eee;
}
.apps {
  display: grid;
  grid-template-columns: repeat(7, 1fr);
  flex: 0 0 206px;
  margin-right: auto;
}
.apps button {
  position: relative;
  display: flex;
  flex-direction: column;
  align-items: center;
  justify-content: flex-end;
  height: 28px;
}
.apps svg {
  width: 17px;
  height: 17px;
}
.apps button::after {
  content: "";
  width: 4px;
  height: 2px;
  margin-top: 3px;
  border-radius: 1px;
}
.apps .run::after {
  background: #999;
}
.apps .on {
  background: #292929;
}
.apps .on::after {
  width: 10px;
  background: #62b5dc;
}
.apps b {
  position: absolute;
  top: 2px;
  right: 4px;
  width: 9px;
  height: 9px;
  border-radius: 5px;
  background: #e03c41;
  color: #fff;
  font-size: 6px;
  line-height: 9px;
}
.systray {
  display: flex;
  align-items: center;
  gap: 6px;
}
.systray svg {
  width: 13px;
  height: 13px;
}
.clock {
  display: flex;
  flex-direction: column;
  align-items: flex-end;
  width: 51px;
  line-height: 10px;
}
</style>
